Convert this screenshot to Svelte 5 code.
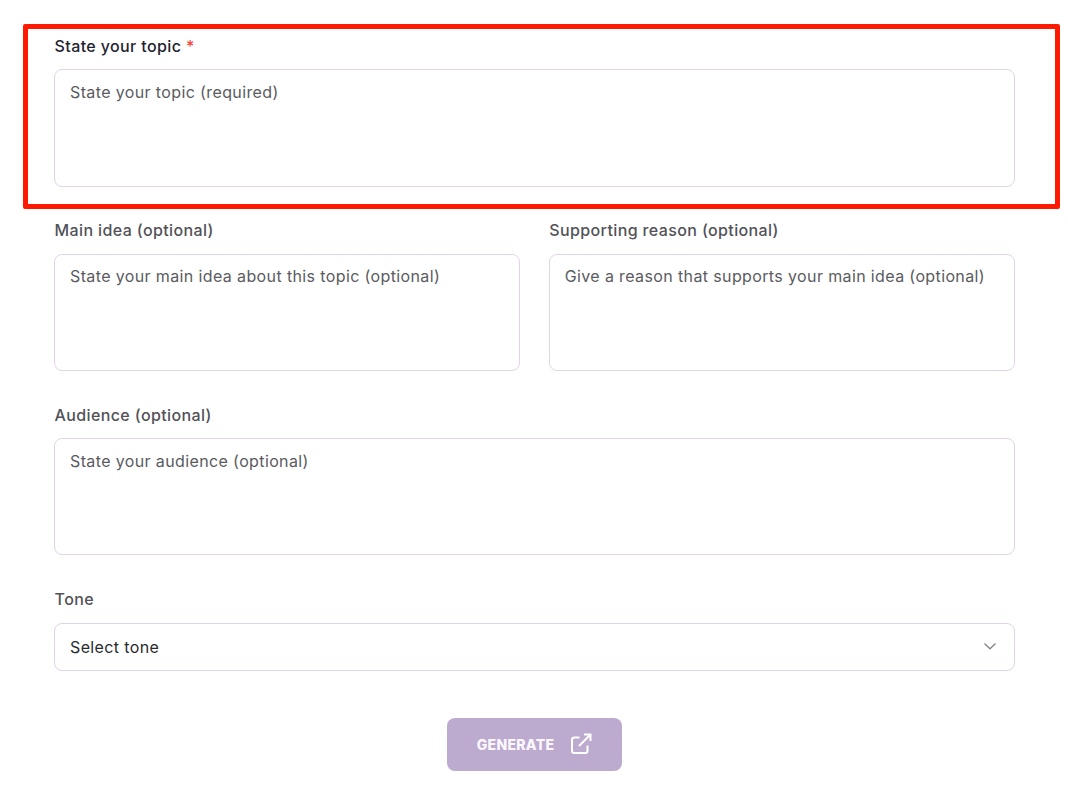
<script>
  let tone = $state('');
</script>

<main class="page">
  <div class="highlight"></div>
  <form class="form" onsubmit={(e) => e.preventDefault()}>
    <div class="field">
      <label for="topic" class="required">State your topic <span class="star">*</span></label>
      <textarea id="topic" placeholder="State your topic (required)"></textarea>
    </div>

    <div class="row">
      <div class="field">
        <label for="idea">Main idea (optional)</label>
        <textarea id="idea" placeholder="State your main idea about this topic (optional)"></textarea>
      </div>
      <div class="field">
        <label for="reason">Supporting reason (optional)</label>
        <textarea id="reason" placeholder="Give a reason that supports your main idea (optional)"></textarea>
      </div>
    </div>

    <div class="field">
      <label for="audience">Audience (optional)</label>
      <textarea id="audience" placeholder="State your audience (optional)"></textarea>
    </div>

    <div class="field">
      <label for="tone">Tone</label>
      <div class="select-wrap">
        <select id="tone" bind:value={tone}>
          <option value="">Select tone</option>
          <option value="formal">Formal</option>
          <option value="casual">Casual</option>
        </select>
        <svg class="chevron" width="14" height="14" viewBox="0 0 14 14" fill="none" stroke="#858585" stroke-width="1.3">
          <path d="M1.5 4.5 7 9.8l5.5-5.3" />
        </svg>
      </div>
    </div>

    <div class="actions">
      <button type="submit" class="generate" disabled>
        GENERATE
        <svg width="22" height="22" viewBox="0 0 22 22" fill="none" stroke="#fff" stroke-width="2">
          <path d="M17.5 12.5v5.2a2.3 2.3 0 0 1-2.3 2.3H4.3A2.3 2.3 0 0 1 2 17.7V6.8a2.3 2.3 0 0 1 2.3-2.3h5.2" />
          <path d="M14 1.5h6.5V8M20.5 1.5 9 13" />
        </svg>
      </button>
    </div>
  </form>
</main>

<style>
  :global(body) {
    background: #fff;
    font-family: Inter, "Liberation Sans", sans-serif;
  }
  .page {
    position: relative;
    height: 795px;
    padding: 34px 53px 0 54px;
    box-sizing: border-box;
    overflow: hidden;
  }
  .highlight {
    position: absolute;
    left: 23px;
    top: 24px;
    width: 1037px;
    height: 185px;
    box-sizing: border-box;
    border: 5px solid #fe1a00;
    border-radius: 2px;
    pointer-events: none;
  }
  .form {
    display: flex;
    flex-direction: column;
    gap: 31.8px;
  }
  .row {
    display: grid;
    grid-template-columns: 1fr 1fr;
    gap: 28.4px;
  }
  label {
    display: block;
    font-size: 16px;
    font-weight: 500;
    line-height: 24px;
    letter-spacing: 0.375px;
    margin-bottom: 11.4px;
    padding-left: 0.6px;
    color: #525257;
  }
  label.required {
    color: #1f2430;
  }
  .star {
    color: #f4433c;
  }
  textarea,
  select {
    display: block;
    width: 100%;
    box-sizing: border-box;
    border: 1px solid #e2d3e6;
    border-radius: 8px;
    background: #fff;
    font-family: inherit;
    font-size: 16px;
    letter-spacing: 0.375px;
    outline: none;
  }
  textarea {
    height: 117.2px;
    padding: 10.6px 15px;
    line-height: 22px;
    resize: none;
  }
  textarea::placeholder {
    color: #5a5b60;
    opacity: 1;
  }
  .select-wrap {
    position: relative;
  }
  select {
    height: 48px;
    padding: 0 40px 0 15px;
    appearance: none;
    color: #2a2a2e;
  }
  .chevron {
    position: absolute;
    right: 18px;
    top: 16px;
    pointer-events: none;
  }
  .actions {
    display: flex;
    justify-content: center;
    margin-top: 15.6px;
  }
  .generate {
    display: flex;
    align-items: center;
    justify-content: center;
    gap: 16px;
    width: 175px;
    height: 53px;
    padding: 0;
    border: none;
    border-radius: 8px;
    background: #bdaacf;
    color: #fbf8fc;
    font-family: Inter, "Liberation Sans", sans-serif;
    font-size: 14px;
    font-weight: 800;
    letter-spacing: 0.3px;
  }
</style>
